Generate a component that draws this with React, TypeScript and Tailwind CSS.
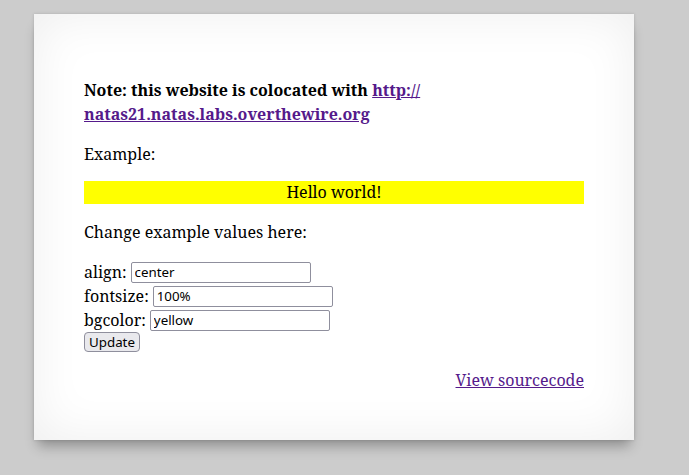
export default function App() {
  const serif = "font-['Noto_Serif','DejaVu_Serif','Liberation_Serif',serif]";
  const sans = "font-['Noto_Sans','Open_Sans',sans-serif]";

  return (
    <div className="min-h-[475px] bg-[#cccccc] pt-[14px] pl-[34px]">
      <div
        className={`w-[600px] h-[426px] bg-white px-[50px] pt-[64px] text-[16px] leading-[24px] text-black ${serif} shadow-[0_10px_12px_-4px_rgba(0,0,0,0.3),0_0_3px_rgba(0,0,0,0.15),inset_0_0_50px_rgba(0,0,0,0.07)]`}
      >
        <p className="font-bold">
          Note: this website is colocated with{' '}
          <a href="#" className="text-[#551a8b] underline">
            http://
            <br />
            natas21.natas.labs.overthewire.org
          </a>
        </p>
        <p className="mt-[16px]">Example:</p>
        <div className="mt-[15px] bg-[#ffff00] text-center h-[23px] leading-[23px]">Hello world!</div>
        <p className="mt-[16px]">Change example values here:</p>
        <form className="mt-[16px] flex flex-col" onSubmit={e => e.preventDefault()}>
          <div className="flex items-center h-[24px]">
            <span>align:</span>
            <input
              defaultValue="center"
              className={`ml-[4px] w-[180px] h-[21px] border border-[#8f8f9d] rounded-[2px] px-[3px] text-[13.33px] ${sans} outline-none`}
            />
          </div>
          <div className="flex items-center h-[24px]">
            <span>fontsize:</span>
            <input
              defaultValue="100%"
              className={`ml-[4px] w-[180px] h-[21px] border border-[#8f8f9d] rounded-[2px] px-[3px] text-[13.33px] ${sans} outline-none`}
            />
          </div>
          <div className="flex items-center h-[24px]">
            <span>bgcolor:</span>
            <input
              defaultValue="yellow"
              className={`ml-[4px] w-[180px] h-[21px] border border-[#8f8f9d] rounded-[2px] px-[3px] text-[13.33px] ${sans} outline-none`}
            />
          </div>
          <div className="mt-[-3px]">
            <button
              type="submit"
              className={`h-[20px] px-[4px] bg-[#e9e9ed] border border-[#8f8f9d] rounded-[4px] text-[13.33px] leading-[16px] text-black ${sans}`}
            >
              Update
            </button>
          </div>
        </form>
        <div className="mt-[15px] text-right">
          <a href="#" className="text-[#551a8b] underline">
            View sourcecode
          </a>
        </div>
      </div>
    </div>
  );
}
